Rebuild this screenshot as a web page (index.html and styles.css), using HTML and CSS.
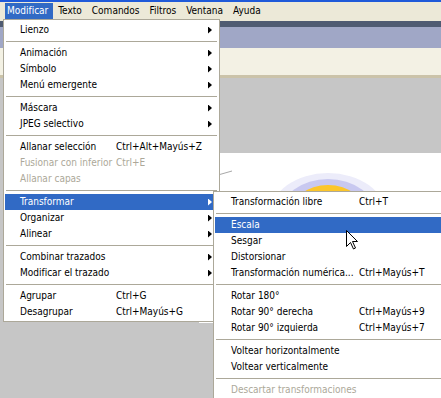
FILE: index.html
```html
<!DOCTYPE html>
<html lang="es">
<head>
<meta charset="UTF-8" />
<title>Modificar - Transformar</title>
<link rel="stylesheet" href="styles.css">
</head>
<body>

<div class="app">
  <div class="title-edge"></div>
  <div class="menubar">
    <span class="menubar-item active">Modificar</span>
    <span class="menubar-item">Texto</span>
    <span class="menubar-item">Comandos</span>
    <span class="menubar-item">Filtros</span>
    <span class="menubar-item">Ventana</span>
    <span class="menubar-item">Ayuda</span>
  </div>
  <div class="band band-dark"></div>
  <div class="band band-mid"></div>
  <div class="band band-light"></div>
  <div class="band band-edge"></div>
  <div class="workspace">
    <div class="document">
      <svg class="doc-art" width="242" height="60" viewBox="0 0 242 60">
        <line x1="19" y1="22" x2="33" y2="18" stroke="#a8a8a8" stroke-width="1" />
        <ellipse cx="129" cy="62" rx="58" ry="42" fill="#ececfa" />
        <ellipse cx="129" cy="62" rx="48" ry="36" fill="#c8c8f0" />
        <ellipse cx="129" cy="62" rx="38" ry="30" fill="#fcc62a" />
      </svg>
    </div>
  </div>
</div>

<!-- Modificar dropdown -->
<div class="menu menu-main">
  <div class="item"><span class="label">Lienzo</span><span class="key"></span><span class="arrow"></span></div>
  <div class="sep"></div>
  <div class="item"><span class="label">Animación</span><span class="key"></span><span class="arrow"></span></div>
  <div class="item"><span class="label">Símbolo</span><span class="key"></span><span class="arrow"></span></div>
  <div class="item"><span class="label">Menú emergente</span><span class="key"></span><span class="arrow"></span></div>
  <div class="sep"></div>
  <div class="item"><span class="label">Máscara</span><span class="key"></span><span class="arrow"></span></div>
  <div class="item"><span class="label">JPEG selectivo</span><span class="key"></span><span class="arrow"></span></div>
  <div class="sep"></div>
  <div class="item"><span class="label">Allanar selección</span><span class="key">Ctrl+Alt+Mayús+Z</span></div>
  <div class="item disabled"><span class="label">Fusionar con inferior</span><span class="key">Ctrl+E</span></div>
  <div class="item disabled"><span class="label">Allanar capas</span><span class="key"></span></div>
  <div class="sep"></div>
  <div class="item selected"><span class="label">Transformar</span><span class="key"></span><span class="arrow"></span></div>
  <div class="item"><span class="label">Organizar</span><span class="key"></span><span class="arrow"></span></div>
  <div class="item"><span class="label">Alinear</span><span class="key"></span><span class="arrow"></span></div>
  <div class="sep"></div>
  <div class="item"><span class="label">Combinar trazados</span><span class="key"></span><span class="arrow"></span></div>
  <div class="item"><span class="label">Modificar el trazado</span><span class="key"></span><span class="arrow"></span></div>
  <div class="sep"></div>
  <div class="item"><span class="label">Agrupar</span><span class="key">Ctrl+G</span></div>
  <div class="item"><span class="label">Desagrupar</span><span class="key">Ctrl+Mayús+G</span></div>
</div>

<!-- Transformar submenu -->
<div class="menu menu-sub">
  <div class="item"><span class="label">Transformación libre</span><span class="key">Ctrl+T</span></div>
  <div class="sep"></div>
  <div class="item selected"><span class="label">Escala</span><span class="key"></span></div>
  <div class="item"><span class="label">Sesgar</span><span class="key"></span></div>
  <div class="item"><span class="label">Distorsionar</span><span class="key"></span></div>
  <div class="item"><span class="label">Transformación numérica...</span><span class="key">Ctrl+Mayús+T</span></div>
  <div class="sep"></div>
  <div class="item"><span class="label">Rotar 180°</span><span class="key"></span></div>
  <div class="item"><span class="label">Rotar 90° derecha</span><span class="key">Ctrl+Mayús+9</span></div>
  <div class="item"><span class="label">Rotar 90° izquierda</span><span class="key">Ctrl+Mayús+7</span></div>
  <div class="sep"></div>
  <div class="item"><span class="label">Voltear horizontalmente</span><span class="key"></span></div>
  <div class="item"><span class="label">Voltear verticalmente</span><span class="key"></span></div>
  <div class="sep"></div>
  <div class="item disabled"><span class="label">Descartar transformaciones</span><span class="key"></span></div>
</div>

<!-- mouse pointer over "Escala" -->
<svg class="pointer" width="13" height="20" viewBox="0 0 13 20">
  <path d="M0.5 0.5 L0.5 16.5 L4.5 12.5 L7.5 19 L9.5 18 L6.5 11.5 L11.5 11.5 Z" fill="#fff" stroke="#000" stroke-width="1" stroke-linejoin="miter" />
</svg>

</body>
</html>
```

FILE: styles.css
```css
body {
  margin: 0;
  padding: 0;
  font-family: 'DejaVu Sans Condensed', 'DejaVu Sans', sans-serif;
  font-size: 10px;
  color: #000;
  position: relative;
  overflow: hidden;
  width: 441px;
  height: 398px;
}
.app {
  display: flex;
  flex-direction: column;
  height: 398px;
  background: #c6c6c6;
}
.title-edge {
  height: 2px;
  background: #1f5ad9;
}
.menubar {
  height: 19px;
  background: #ece9d8;
  display: flex;
  align-items: flex-start;
  padding-left: 5px;
}
.menubar-item {
  height: 16px;
  line-height: 16px;
  margin-top: 1px;
  padding: 0 5px 0 2px;
  margin-right: 3px;
}
.menubar-item.active {
  background: #316ac5;
  color: #fff;
}
.band { flex: none; }
.band-dark { height: 6px; background: #4f5b72; }
.band-mid { height: 21px; background: #a0a7c6; }
.band-light { height: 27px; background: #f3f1e4; }
.band-edge { height: 3px; background: #cbc3a9; }
.workspace {
  flex: 1;
  background: #c6c6c6;
}
.document {
  margin: 75px 0 0 199px;
  height: 170px;
  background: #fff;
}
.doc-art { display: block; }

/* dropdown menus */
.menu {
  position: absolute;
  background: #fff;
  border: 1px solid #aca899;
  padding: 2px 1px 1px;
  z-index: 10;
}
.menu-main {
  left: 3px;
  top: 19px;
  width: 213px;
}
.menu-sub {
  left: 213px;
  top: 191px;
  width: 240px;
  z-index: 11;
}
.item {
  display: grid;
  height: 16px;
  line-height: 16px;
  align-items: center;
  white-space: nowrap;
}
.menu-main .item {
  grid-template-columns: 96px 1fr 4px;
  padding: 0 6px 0 15px;
}
.menu-sub .item {
  grid-template-columns: 128px 1fr;
  padding: 0 6px 0 16px;
}
.item.selected {
  background: #316ac5;
  color: #fff;
}
.item.disabled {
  color: #aca899;
}
.arrow {
  width: 4px;
  height: 7px;
  background: #000;
  clip-path: polygon(0 0, 100% 50%, 0 100%);
}
.item.selected .arrow {
  background: #fff;
}
.sep {
  height: 1px;
  margin: 3px 1px 3px;
  background: #aca899;
}
.pointer {
  position: absolute;
  left: 346px;
  top: 230px;
  z-index: 20;
}
```
